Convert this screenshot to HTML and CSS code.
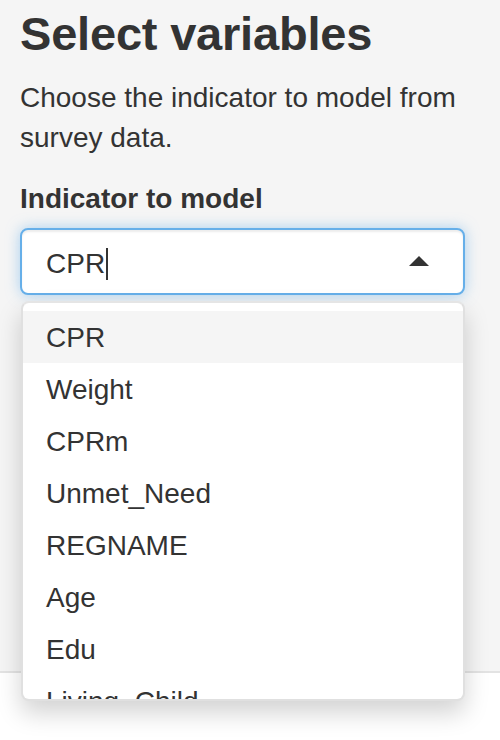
FILE: index.html
```html
<!DOCTYPE html>
<html>
<head>
<meta charset="utf-8">
<link rel="stylesheet" href="styles.css">
</head>
<body>
<div class="page">
  <div class="well">
    <h3 class="title">Select variables</h3>
    <p class="help">Choose the indicator to model from survey data.</p>
    <div class="form-group">
      <label class="label">Indicator to model</label>
      <div class="selectize">
        <div class="control">
          <span class="value">CPR</span><span class="cursor"></span>
          <span class="caret"></span>
        </div>
        <div class="dropdown">
          <div class="dropdown-content">
            <div class="option active">CPR</div>
            <div class="option">Weight</div>
            <div class="option">CPRm</div>
            <div class="option">Unmet_Need</div>
            <div class="option">REGNAME</div>
            <div class="option">Age</div>
            <div class="option">Edu</div>
            <div class="option">Living_Child</div>
          </div>
        </div>
      </div>
    </div>
  </div>
  <div class="below"></div>
</div>
</body>
</html>
```

FILE: styles.css
```css
html, body {
  margin: 0;
  padding: 0;
  background: #ffffff;
}
body {
  font-family: "Liberation Sans", Arial, sans-serif;
  color: #333333;
  font-size: 28px;
  line-height: 40px;
}
.page {
  height: 740px;
  overflow: hidden;
  display: flex;
  flex-direction: column;
}
.well {
  box-sizing: border-box;
  height: 673px;
  flex: none;
  background: #f5f5f5;
  border-bottom: 2px solid #e3e3e3;
  padding: 8px 35px 0 20px;
}
.below {
  flex: 1;
  background: #ffffff;
}
.title {
  margin: 0;
  font-size: 47px;
  line-height: 52px;
  font-weight: 700;
  letter-spacing: -0.2px;
}
.help {
  margin: 18px 0 0 0;
}
.form-group {
  margin-top: 21px;
}
.label {
  display: block;
  font-weight: 700;
  margin-bottom: 9px;
}
.selectize {
  position: relative;
}
.control {
  box-sizing: border-box;
  height: 67px;
  background: #ffffff;
  border: 2px solid #66afe9;
  border-radius: 8px;
  box-shadow: inset 0 2px 2px rgba(0,0,0,0.075), 0 0 14px rgba(102,175,233,0.55);
  padding: 12px 24px 8px;
  display: flex;
  align-items: center;
}
.value {
  line-height: 40px;
}
.cursor {
  display: inline-block;
  width: 2px;
  height: 32px;
  background: #333333;
  margin-left: 1px;
}
.caret {
  margin-left: auto;
  margin-right: 10px;
  width: 0;
  height: 0;
  border-left: 10px solid transparent;
  border-right: 10px solid transparent;
  border-bottom: 10px solid #333333;
  margin-top: -6px;
}
.dropdown {
  position: absolute;
  left: 1px;
  right: 0;
  top: 73px;
  box-sizing: border-box;
  height: 400px;
  overflow: hidden;
  background: #ffffff;
  border: 2px solid rgba(0,0,0,0.12);
  border-top-color: rgba(0,0,0,0.1);
  border-radius: 8px;
  box-shadow: 0 12px 24px rgba(0,0,0,0.175);
  z-index: 10;
}
.dropdown-content {
  padding: 8px 0;
}
.option {
  padding: 7px 23px 5px;
  line-height: 40px;
}
.option.active {
  background: #f5f5f5;
}
```
